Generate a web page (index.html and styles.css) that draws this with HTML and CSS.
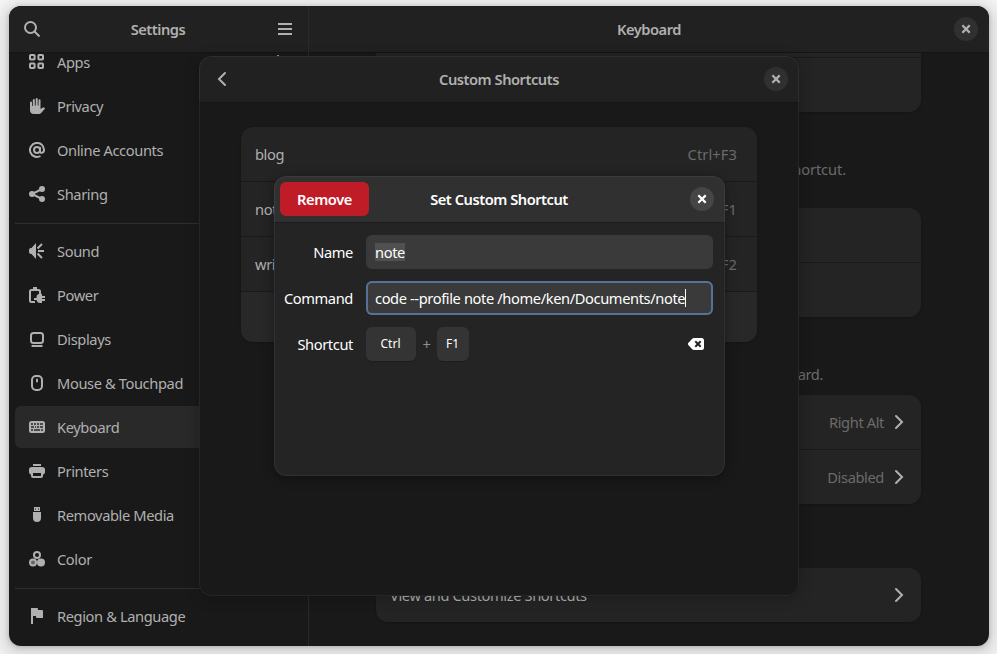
FILE: index.html
```html
<!DOCTYPE html>
<html lang="en">
<head>
<meta charset="utf-8">
<title>Settings</title>
<link rel="stylesheet" href="styles.css">
</head>
<body>
<svg class="defs" aria-hidden="true">
  <symbol id="close" viewBox="0 0 16 16"><path d="M5.100 5.100l5.800 5.800M10.900 5.100l-5.800 5.800" fill="none" stroke="currentColor" stroke-width="2.200" stroke-linecap="square"/></symbol>
  <symbol id="next" viewBox="0 0 16 16"><path d="M5 2l6 6-6 6" fill="none" stroke="currentColor" stroke-width="2" stroke-linecap="round"/></symbol>
</svg>
<main class="window">
  <aside class="sidebar">
    <header class="bar">
      <svg class="icon search" viewBox="0 0 16 16"><g fill="none" stroke="currentColor" stroke-width="2"><circle cx="6.500" cy="6.500" r="5.500"/><path d="M10.500 10.500l5 5"/></g></svg>
      <h1>Settings</h1>
      <svg class="icon" viewBox="0 0 16 16"><path d="M1 2h14v2H1zM1 7h14v2H1zM1 12h14v2H1z" fill="currentColor"/></svg>
    </header>
    <nav class="nav">
      <a class="item"><svg class="icon" viewBox="0 0 16 16"><g fill="none" stroke="currentColor" stroke-width="2"><rect x="1" y="1" width="4.600" height="4.600" rx=".8"/><rect x="9.400" y="1" width="4.600" height="4.600" rx=".8"/><rect x="1" y="9.400" width="4.600" height="4.600" rx=".8"/><rect x="9.400" y="9.400" width="4.600" height="4.600" rx=".8"/></g></svg><span>Apps</span><svg class="icon push"><use href="#next"/></svg></a>
      <a class="item"><svg class="icon" viewBox="0 0 16 16"><path d="M1 8V4.500a1 1 0 0 1 2 0V8h.8V2a1 1 0 0 1 2 0v5.500h.9V1a1 1 0 0 1 2 0v6.500h.8V2.300a1 1 0 0 1 2 0V11l2-1.300c1.300-.7 2.900.1 2.200 1.200L13 14c-1 1.500-2 2-3.500 2H5c-2.700 0-4-1.500-4-4V8z" fill="currentColor"/></svg><span>Privacy</span></a>
      <a class="item"><svg class="icon" viewBox="0 0 16 16"><g fill="none" stroke="currentColor" stroke-width="2"><circle cx="8" cy="8" r="3"/><path d="M11 5v4.500c0 2 4 2 4-1.500a7 7 0 1 0-3.500 6"/></g></svg><span>Online Accounts</span></a>
      <a class="item"><svg class="icon" viewBox="0 0 16 16"><g fill="currentColor"><circle cx="3" cy="8" r="3"/><circle cx="13" cy="3" r="3"/><circle cx="13" cy="13" r="3"/></g><path d="M13 3L3 8l10 5" fill="none" stroke="currentColor" stroke-width="2"/></svg><span>Sharing</span></a>
      <hr>
      <a class="item"><svg class="icon" viewBox="0 0 16 16"><path d="M7 0v16L2.500 11H2a2 2 0 0 1-2-2V7a2 2 0 0 1 2-2h.5z" fill="currentColor"/><path d="M8.500 5.500L13 1M9 8h6M8.500 10.500L13 15" fill="none" stroke="currentColor" stroke-width="2"/></svg><span>Sound</span></a>
      <a class="item"><svg class="icon" viewBox="0 0 16 16"><path d="M6 15H2.500C1.500 15 1 14.500 1 13.500v-9C1 3.500 1.500 3 2.500 3h7c1 0 1.500.5 1.500 1.500V6" fill="none" stroke="currentColor" stroke-width="2"/><path d="M4 0h4v2H4zM10 6h2v1h1v2h3v2h-3v1h3v2h-3v2h-2c-2 0-3-1-3.500-3H5v-2h2.500C7.500 8 8.500 7 10 7z" fill="currentColor"/></svg><span>Power</span></a>
      <a class="item"><svg class="icon" viewBox="0 0 16 16"><rect x="2" y="2" width="12" height="10" rx="2.500" fill="none" stroke="currentColor" stroke-width="2"/><path d="M4 14h8a1 1 0 0 1 1 2H3a1 1 0 0 1 1-2z" fill="currentColor"/></svg><span>Displays</span></a>
      <a class="item"><svg class="icon" viewBox="0 0 16 16"><rect x="3" y="1" width="10" height="14" rx="4" fill="none" stroke="currentColor" stroke-width="2"/><rect x="7" y="3.500" width="2" height="4" rx="1" fill="currentColor"/></svg><span>Mouse &amp; Touchpad</span></a>
      <a class="item selected"><svg class="icon" viewBox="0 0 16 16"><rect y="2" width="16" height="12" rx="2.500" fill="currentColor"/><path d="M2 5h2m1 0h2m1 0h2m1 0h3M2 8h3m1 0h1m1 0h2m1 0h3M2 11h2m1 0h6m1 0h2" stroke="#292929" stroke-width="1.500"/></svg><span>Keyboard</span></a>
      <a class="item"><svg class="icon" viewBox="0 0 16 16"><path d="M4 1h8v2H4zM3 4h10c2 0 3 1 3 2.500V9c0 1.500-1 2.500-2 2.500V13c0 1.200-.8 2-2 2H4c-1.200 0-2-.8-2-2v-1.500C1 11.500 0 10.500 0 9V6.500C0 5 1 4 3 4zm1 6v3h8v-3z" fill="currentColor" fill-rule="evenodd"/></svg><span>Printers</span></a>
      <a class="item"><svg class="icon" viewBox="0 0 16 16"><path d="M5 0h6v4H5zm1 1.500v1h1v-1zm3 0v1h1v-1zM4 5h8v6a4 4 0 0 1-8 0z" fill="currentColor" fill-rule="evenodd"/></svg><span>Removable Media</span></a>
      <a class="item"><svg class="icon" viewBox="0 0 16 16"><circle cx="8" cy="4" r="3" fill="none" stroke="currentColor" stroke-width="2"/><circle cx="4" cy="11.500" r="3" fill="#666" stroke="currentColor" stroke-width="2"/><circle cx="12" cy="11.500" r="4" fill="currentColor"/></svg><span>Color</span></a>
      <hr>
      <a class="item"><svg class="icon" viewBox="0 0 16 16"><path d="M2 0h6a1 1 0 0 1 1 1v1h4a1 1 0 0 1 1 1v7H8a1 1 0 0 1-1-1V8H4v8H2z" fill="currentColor"/></svg><span>Region &amp; Language</span></a>
    </nav>
  </aside>
  <section class="content">
    <header class="bar"><h1>Keyboard</h1><button class="close" aria-label="Close"><svg class="icon"><use href="#close"/></svg></button></header>
    <div class="panel">
      <div class="card clipped"><div class="row short"></div><div class="row"></div></div>
      <p class="hint sources">shortcut.</p>
      <div class="card"><div class="row"></div><div class="row"></div></div>
      <p class="hint entry">keyboard.</p>
      <div class="card">
        <div class="row"><span class="value">Right Alt</span><svg class="icon"><use href="#next"/></svg></div>
        <div class="row"><span class="value">Disabled</span><svg class="icon"><use href="#next"/></svg></div>
      </div>
      <div class="card last"><div class="row"><span>View and Customize Shortcuts</span><svg class="icon push"><use href="#next"/></svg></div></div>
    </div>
  </section>
</main>

<section class="dialog shortcuts">
  <header class="bar">
    <svg class="icon back" viewBox="0 0 16 16"><path d="M11 2L5 8l6 6" fill="none" stroke="currentColor" stroke-width="2" stroke-linecap="round"/></svg>
    <h1>Custom Shortcuts</h1>
    <button class="close" aria-label="Close"><svg class="icon"><use href="#close"/></svg></button>
  </header>
  <div class="card list">
    <div class="row"><span>blog</span><span class="value accel">Ctrl+F3</span></div>
    <div class="row"><span>note</span><span class="value accel">Ctrl+F1</span></div>
    <div class="row"><span>write</span><span class="value accel">Ctrl+F2</span></div>
    <div class="row add"></div>
  </div>
</section>

<section class="dialog editor">
  <header class="bar">
    <button class="remove">Remove</button>
    <h1>Set Custom Shortcut</h1>
    <button class="close" aria-label="Close"><svg class="icon"><use href="#close"/></svg></button>
  </header>
  <div class="form">
    <span class="label">Name</span><div class="entry-box"><span class="selection">note</span></div>
    <span class="label">Command</span><div class="entry-box focused"><span class="typed">code --profile note /home/ken/Documents/note</span><i class="caret"></i></div>
    <span class="label">Shortcut</span>
    <div class="keys"><kbd class="ctrl">Ctrl</kbd><span class="plus">+</span><kbd class="f1">F1</kbd>
      <svg class="icon push" viewBox="0 0 16 16"><path d="M6 2h7.500A2.500 2.500 0 0 1 16 4.500v7a2.500 2.500 0 0 1-2.500 2.500H6c-.8 0-1.500-.4-2-1L.5 9.200a1.700 1.700 0 0 1 0-2.400L4 3c.5-.6 1.200-1 2-1z" fill="currentColor"/><path d="M8 6l4 4m0-4l-4 4" stroke="#242424" stroke-width="2" stroke-linecap="square"/></svg></div>
  </div>
</section>
</body>
</html>
```
FILE: styles.css
```css
* { box-sizing: border-box; }

body {
  margin: 0;
  width: 997px;
  height: 654px;
  padding: 6px 8px 8px 9px;
  overflow: hidden;
  background: #f6f6f6;
  color: #b0b0b0;
  font: 14.67px/20px "Noto Sans", sans-serif;
  letter-spacing: -.39px;
}

.defs { position: absolute; width: 0; height: 0; }
.icon { width: 16px; height: 16px; flex: none; display: block; }
.push { margin-left: auto; }

.window {
  display: flex;
  width: 980px;
  height: 640px;
  border-radius: 12px;
  overflow: hidden;
  background: #191919;
  box-shadow: 0 1px 5px rgba(0, 0, 0, .22), 0 4px 16px 8px rgba(0, 0, 0, .12);
}

.bar {
  display: grid;
  grid-template-columns: 1fr auto 1fr;
  align-items: center;
  flex: none;
  height: 47px;
  padding: 0 11px;
  background: #212121;
  border-bottom: 1px solid #151515;
}
.bar h1 {
  grid-column: 2;
  grid-row: 1;
  margin: 0;
  font-size: 14.67px;
  font-weight: 600;
  letter-spacing: -.47px;
}
.bar > :last-child { grid-column: 3; justify-self: end; }

.close {
  display: grid;
  place-items: center;
  width: 24px;
  height: 24px;
  padding: 0;
  border: 0;
  border-radius: 50%;
  background: #303030;
  color: inherit;
}

.sidebar {
  display: flex;
  flex-direction: column;
  width: 300px;
  border-right: 1px solid #2a2a2a;
}
.sidebar .bar { padding: 0 15px; }
.sidebar h1 { margin-right: 1px; }
.nav {
  display: flex;
  flex-direction: column;
  gap: 2px;
  min-height: 0;
  overflow: hidden;
  padding: 0 5px 0 6px;
}
.nav .item:first-child { margin-top: -12px; }
.item {
  display: flex;
  align-items: center;
  flex: none;
  gap: 12px;
  height: 42px;
  padding: 0 14px;
  border-radius: 6px;
}
.selected { background: #292929; }
.nav hr {
  flex: none;
  width: 100%;
  height: 1px;
  margin: 6px 0 4px;
  border: 0;
  background: #2f2f2f;
}

.content { flex: 1; display: flex; flex-direction: column; }
.panel { flex: 1; min-height: 0; overflow: hidden; padding: 0 68px 0 67px; }
.card {
  border-radius: 12px;
  background: #242424;
  box-shadow: 0 1px 3px rgba(0, 0, 0, .2);
  overflow: hidden;
}
.row {
  display: flex;
  align-items: center;
  height: 54px;
  padding: 0 14px;
}
.row + .row { height: 55px; border-top: 1px solid #191919; }
.row.short { height: 4px; }
.clipped { border-radius: 0 0 12px 12px; }
.value { margin-left: auto; color: #6b6b6b; }
.accel { letter-spacing: .1px; }
.value + .icon { margin-left: 7px; }
.hint { margin: 0; text-align: right; color: #6b6b6b; }
.sources { padding: 47px 75px 29px 0; letter-spacing: -.1px; }
.entry { padding: 47px 98px 11px 0; }
.last { margin-top: 64px; }

.dialog {
  position: absolute;
  border-radius: 12px;
  overflow: hidden;
}
.dialog::after {
  content: "";
  position: absolute;
  inset: 0;
  border: 1px solid rgba(255, 255, 255, .06);
  border-radius: inherit;
  pointer-events: none;
}
.shortcuts {
  left: 199px;
  top: 56px;
  width: 600px;
  height: 540px;
  background: #191919;
  box-shadow: 0 2px 14px rgba(0, 0, 0, .25);
}
.back { margin-left: 4px; }
.list { margin: 24px 42px 0; }
.list .row { padding-right: 20px; }
.list .add { height: 51px; background: #282828; }

.editor {
  left: 274px;
  top: 176px;
  width: 451px;
  height: 300px;
  background: #242424;
  color: #fff;
  box-shadow: 0 2px 12px rgba(0, 0, 0, .35);
}
.editor .bar { padding: 0 11px 0 6px; background: #303030; border-color: #1d1d1d; }
.editor h1 { margin-left: 4px; }
.editor .close { background: #454545; }
.remove {
  justify-self: start;
  width: 89px;
  height: 34px;
  padding: 0;
  border: 0;
  border-radius: 6px;
  background: #c01c28;
  color: #fff;
  font: 600 14.67px/20px "Noto Sans", sans-serif;
  letter-spacing: -.4px;
}
.form {
  display: grid;
  grid-template-columns: 80px 347px;
  grid-auto-rows: 34px;
  gap: 12px;
  align-items: center;
  padding-top: 12px;
}
.label { padding-right: 1px; text-align: right; }
.entry-box {
  display: flex;
  align-items: center;
  height: 34px;
  padding: 0 9px;
  border-radius: 6px;
  background: #3a3a3a;
}
.focused { box-shadow: inset 0 0 0 2px #557297; }
.selection { height: 18px; line-height: 18px; background: #505050; }
.caret { width: 1px; height: 18px; background: #fff; }
.keys { display: flex; align-items: center; padding-right: 9px; }
kbd {
  height: 34px;
  padding-right: 1px;
  border-radius: 6px;
  background: #343434;
  box-shadow: 0 1px 1px rgba(0, 0, 0, .2);
  font: 12px/33px "Noto Sans", sans-serif;
  letter-spacing: 0;
  text-align: center;
}
.ctrl { width: 50px; }
.f1 { width: 32px; }
.plus { width: 21px; text-align: center; color: #909090; }
```
